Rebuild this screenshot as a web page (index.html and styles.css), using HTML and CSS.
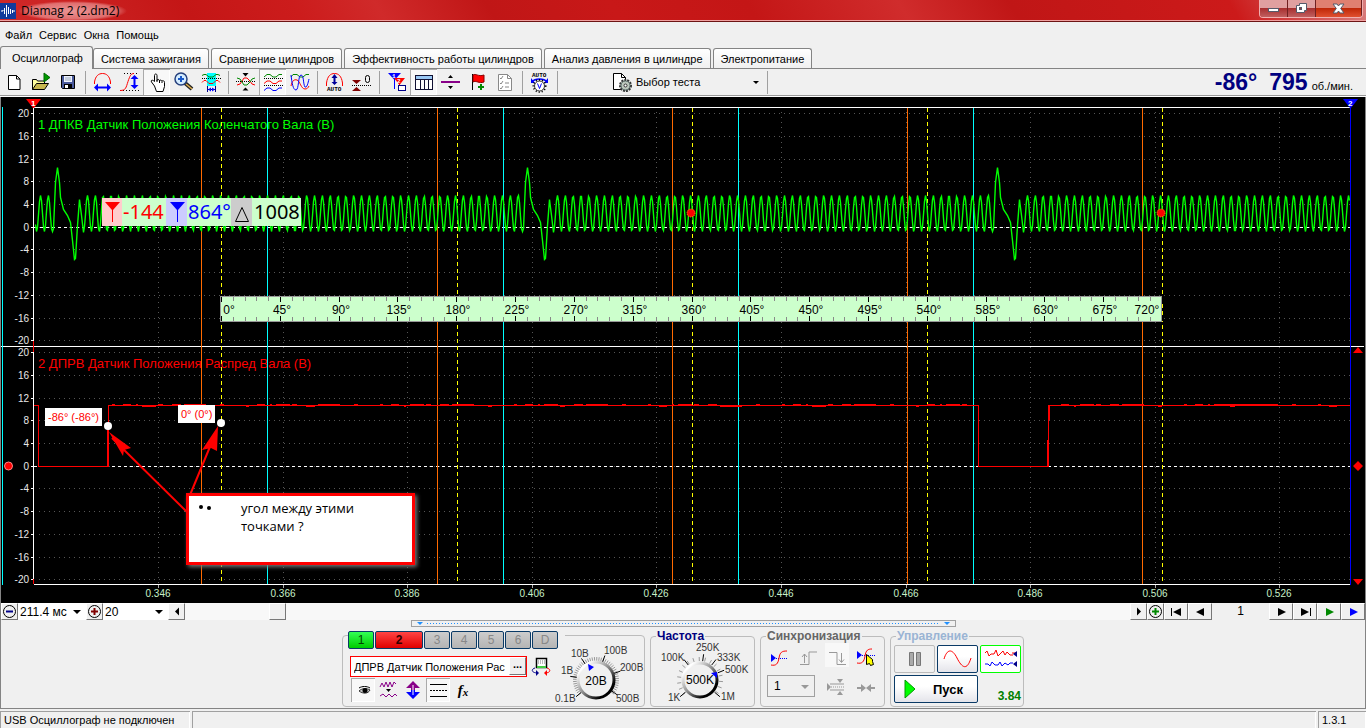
FILE: index.html
```html
<!DOCTYPE html>
<html lang="ru">
<head>
    <meta charset="UTF-8">
    <meta name="viewport" content="width=device-width, initial-scale=1.0">
    <title>Diamag 2 (2.dm2)</title>
    <link rel="stylesheet" href="styles.css">
</head>
<body>
    <header class="titlebar">
        <svg class="app-icon" width="16" height="16" viewBox="0 0 16 16">
            <rect width="16" height="16" fill="#123a9c"/>
            <path d="M1 8h2v-1M4.500 5v6M6.500 2v12M8.500 4v7M10.500 6v5M12.500 7v3M13 8h2" fill="none" stroke="#fff"/>
        </svg>
        <h1 class="title">Diamag 2 (2.dm2)</h1>
        <div class="window-buttons">
            <button class="win-btn" aria-label="Свернуть"><svg width="13" height="13"><rect x="1.500" y="6.500" width="10" height="3" fill="#fff" stroke="#555a6a"/></svg></button>
            <button class="win-btn" aria-label="Развернуть"><svg width="13" height="13"><path d="M4.500 1.500h7v7h-2v2h-8v-7h3z" fill="#fff" stroke="#555a6a"/><rect x="4.500" y="5.500" width="2" height="2" fill="#a33" stroke="#555a6a"/></svg></button>
            <button class="win-btn win-close" aria-label="Закрыть"><svg width="13" height="13"><path d="M1 2h4l1.500 2L8 2h4L8.700 6.500 12 11H8L6.500 9 5 11H1l3.300-4.500z" fill="#fff" stroke="#555a6a"/></svg></button>
        </div>
    </header>

    <nav class="menu">
        <a href="#">Файл</a>
        <a href="#">Сервис</a>
        <a href="#">Окна</a>
        <a href="#">Помощь</a>
    </nav>

    <div class="tabs" role="tablist">
        <button class="tab active" role="tab">Осциллограф</button>
        <button class="tab" role="tab">Система зажигания</button>
        <button class="tab" role="tab">Сравнение цилиндров</button>
        <button class="tab" role="tab">Эффективность работы цилиндров</button>
        <button class="tab" role="tab">Анализ давления в цилиндре</button>
        <button class="tab" role="tab">Электропитание</button>
    </div>

    <div class="toolbar">
        <button class="tool" aria-label="Новый"><svg viewBox="0 0 27 26"><path d="M8.500 6.500h8l3.500 3.500v10.500H8.500z" fill="#fff" stroke="#000"/><path d="M16.500 6.500V10H20" fill="none" stroke="#000"/></svg></button>
        <button class="tool" aria-label="Открыть"><svg viewBox="0 0 27 26"><path d="M5.500 20.500v-10h4l1 1.500h7v3" fill="#ffffa0" stroke="#000"/><path d="M5.500 20.500l4-6h12l-4 6z" fill="#c8b850" stroke="#000"/><path d="M17 4l6 4.500-6 4.500z" fill="#090" stroke="#060"/></svg></button>
        <button class="tool" aria-label="Сохранить"><svg viewBox="0 0 27 26"><path d="M7.500 6.500h13v13h-12l-1-1z" fill="#4a5a9c" stroke="#000"/><rect x="10" y="7" width="8" height="6" fill="#eef2ff"/><path d="M11 9h6M11 11h6" stroke="#9ab"/><rect x="10" y="15" width="8" height="5" fill="#000"/><rect x="11" y="16" width="3" height="3" fill="#fff"/></svg></button>
        <span class="sep"></span>
        <button class="tool" aria-label="Ширина"><svg viewBox="0 0 27 26"><path d="M5.500 15V13c1-6 4-8.500 8-8.500s7 2.500 8 8.500v2" fill="none" stroke="#f00"/><path d="M5 18.500l4-4v3h9v-3l4 4-4 4v-3H9v3z" fill="#00f"/></svg></button>
        <button class="tool" aria-label="Высота"><svg viewBox="0 0 27 26"><path d="M8 4.500h15M4 21.500h19" stroke="#000" stroke-dasharray="1 2"/><path d="M4 21.500c6 0 6-3 8-9s3-8 6-8" fill="none" stroke="#f00"/><path d="M18.500 6l4 4h-3v6h3l-4 4-4-4h3v-6h-3z" fill="#00f"/></svg></button>
        <button class="tool pressed" aria-label="Рука"><svg viewBox="0 0 27 26"><path d="M11.500 17l-3-4c-1-2 1-2.500 3-.5V6.500c0-2 2.500-2 2.500 0v5c0-1.500 2.500-1.500 2.500.5 0-1.500 2.500-1 2.500.500 0-1.500 2.500-1 2.500 1v4l-1.500 5h-6.500z" fill="#fff" stroke="#000"/><path d="M14 11v2M16.500 12v2M19 13v1" stroke="#000"/></svg></button>
        <button class="tool" aria-label="Лупа"><svg viewBox="0 0 27 26"><path d="M15 14l7 6" stroke="#222" stroke-width="4"/><path d="M16 15l6 5" stroke="#e0b050" stroke-width="1.500"/><circle cx="11" cy="10" r="6" fill="#d4ecff" stroke="#26407c" stroke-width="1.500"/><path d="M8 10h6M11 7v6" stroke="#1858c8" stroke-width="2"/></svg></button>
        <button class="tool" aria-label="Фрагмент"><svg viewBox="0 0 27 26"><path d="M10 4h9v13h-9z" fill="#0ff"/><path d="M5 6.500l2-1h2l3 2.500h4l3-2.500h2l2 1" fill="none" stroke="#080"/><path d="M5 9.500h19" stroke="#000" stroke-dasharray="1 1"/><path d="M5 13.500l2-2h2l3 3h4l3-3h2l2 2" fill="none" stroke="#f00"/><path d="M10.500 17v6M18.500 17v6M11 20.500h7" stroke="#008" fill="none"/><path d="M11 20.500l3-2v4zM18 20.500l-3-2v4z" fill="#00f"/></svg></button>
        <span class="sep"></span>
        <button class="tool" aria-label="Совместить"><svg viewBox="0 0 27 26"><path d="M10.500 4h6l-3 3.500zM10.500 21.500h6l-3-3z" fill="#000"/><path d="M4 12.500h20" stroke="#000" stroke-dasharray="1 1"/><path d="M5 16l3-1 2-3 2-3h3l3 3 2 3 3 1" fill="none" stroke="#f00"/><path d="M5 9l3 1 2 3 2 3h3l3-3 2-3 3-1" fill="none" stroke="#080"/></svg></button>
        <button class="tool pressed" aria-label="Разделить"><svg viewBox="0 0 27 26"><path d="M5 8l3-2.500h3l3 2.500h3l3-2.500h3" fill="none" stroke="#080"/><path d="M5 9.500h19M5 16.500h19" stroke="#000" stroke-dasharray="1 1"/><path d="M5 14.500l3-2.500h3l3 2.500h3l3-2.500h3" fill="none" stroke="#f00"/><path d="M5 21.500l3-2.500h3l3 2.500h3l3-2.500h3" fill="none" stroke="#00f"/></svg></button>
        <button class="tool" aria-label="Наложить"><svg viewBox="0 0 27 26"><path d="M5 8l2-2.500h4l3 2.500h3l3-2.500h3" fill="none" stroke="#080"/><path d="M5 17c1-5 3-7 6-6s4 9 8 9c2 0 3-1 4-3" fill="none" stroke="#f00"/><path d="M5 6c1 8 2 15 5 15s2-15 5-15 2 9 4 12c2 1 3-4 4-8" fill="none" stroke="#00f"/></svg></button>
        <span class="sep"></span>
        <button class="tool" aria-label="Авто"><svg viewBox="0 0 27 26"><path d="M5.500 17v-3c1-7 4-9.500 8-9.500s7 2.500 8 9.500v3" fill="none" stroke="#f00"/><path d="M13.500 5l3 4h-2v4h2l-3 3-3-3h2V9h-2z" fill="#009"/><text x="6" y="22" class="tiny">AUTO</text></svg></button>
        <button class="tool" aria-label="Ноль"><svg viewBox="0 0 27 26"><path d="M4 11h9l-4.500 4zM4 22h9l-4.500-4z" fill="#800000"/><path d="M4 16.500h19" stroke="#000" stroke-dasharray="1 1"/><rect x="17.500" y="6.500" width="4" height="7" rx="2" fill="none" stroke="#000"/></svg></button>
        <span class="sep"></span>
        <button class="tool" aria-label="Маркеры"><svg viewBox="0 0 27 26"><path d="M5 4h13l-6.500 7z" fill="#00f"/><path d="M11.500 10v10" stroke="#00f"/><path d="M11 9h11l-5.500 7z" fill="#f00"/><path d="M16.500 14v5" stroke="#f00"/><text x="9" y="9" class="tiny light">1</text><text x="14" y="14" class="tiny light">2</text><rect x="15.500" y="16.500" width="7" height="5" fill="#fff" stroke="#008"/></svg></button>
        <button class="tool pressed" aria-label="Таблица"><svg viewBox="0 0 27 26"><rect x="5.500" y="6.500" width="17" height="14" fill="#fff" stroke="#113"/><path d="M6 7h16v3H6z" fill="#9ac8f4"/><path d="M6 10.500h16M10.500 10v10M14.500 10v10M18.500 10v10" stroke="#113"/></svg></button>
        <button class="tool" aria-label="Линия"><svg viewBox="0 0 27 26"><path d="M4 12h19v2H4z" fill="#808"/><path d="M11 9h5l-2.500-3zM11 17h5l-2.500 3z" fill="#000"/></svg></button>
        <button class="tool" aria-label="Флаг"><svg viewBox="0 0 27 26"><path d="M8.500 5v16" stroke="#000"/><path d="M9 6c3-2 5 2 11 0v7c-5 2-8-2-11 0z" fill="#f00" stroke="#800"/><path d="M14 18h6M17 15v6" stroke="#080" stroke-width="2"/></svg></button>
        <button class="tool" aria-label="Список"><svg viewBox="0 0 27 26"><path d="M7.500 5.500h9l4 4v12h-13z" fill="#fff" stroke="#888"/><path d="M16.500 5.500v4h4M9 9l1 1 2-3M9 14l1 1 2-3M9 19l1 1 2-3M14 14h4M14 18h4" fill="none" stroke="#888"/></svg></button>
        <span class="sep"></span>
        <button class="tool" aria-label="Автоизмерение"><svg viewBox="0 0 27 26"><text x="6" y="8" class="tiny">AUTO</text><path d="M6 13c3-4 12-4 15 0" fill="none" stroke="#00f" stroke-width="1.500"/><path d="M5 9v5h4zM22 9v5h-4z" fill="#00f"/><circle cx="13.500" cy="17" r="6" fill="none" stroke="#000" stroke-width="2" stroke-dasharray="1 2"/><circle cx="13.500" cy="17" r="5" fill="#fff" stroke="#333"/><path d="M11.500 14.500l2 5 2-5" fill="none" stroke="#00f"/></svg></button>
        <span class="sep"></span>
        <button class="test-select">
            <svg width="21" height="21" viewBox="0 0 21 21"><path d="M1.500 1.500h8l4 4v12h-12z" fill="#fff" stroke="#000"/><path d="M9.500 1.500v4h4" fill="none" stroke="#000"/><circle cx="13.500" cy="13.500" r="5.500" fill="#c8d4c8" stroke="#333" stroke-width="2" stroke-dasharray="2 1"/><circle cx="13.500" cy="13.500" r="4.500" fill="#bcc8bc" stroke="#566"/><circle cx="13.500" cy="13.500" r="1.500" fill="#fff" stroke="#333"/></svg>
            <span>Выбор теста</span>
            <i class="caret"></i>
        </button>
        <span class="sep"></span>
        <div class="rpm">
            <strong>-86°</strong>
            <strong>795</strong>
            <span>об./мин.</span>
        </div>
    </div>

    <main class="scope">
        <svg id="plot" viewBox="1 97 1364 506" xmlns="http://www.w3.org/2000/svg">
            <g id="grid"></g>
            <g class="crisp">
                <path d="M34 107.500H1350M1 346.500H1364M34 584.500H1350" stroke="#fff"/>
                <path d="M33.500 108V584" stroke="#fff"/>
                <path d="M33.500 341V352M33.500 579V584" stroke="#f00"/>
                <path d="M2.500 107V585" stroke="#0ff"/>
                <path d="M34 227.500H1350M34 466.500H1350" stroke="#fff" stroke-dasharray="3 3"/>
            </g>
            <text x="38" y="129" class="channel ch1">1 ДПКВ Датчик Положения Коленчатого Вала (В)</text>
            <text x="38" y="368" class="channel ch2">2 ДПРВ Датчик Положения Распред Вала (В)</text>
            <g id="cursors" class="crisp"></g>
            <path id="crank" class="trace" stroke="#0f0"/>
            <path id="cam" class="trace crisp" stroke="#f00"/>
            <path id="camNoise" class="trace crisp" stroke="#f00"/>
            <g id="ruler" class="crisp"></g>

            <!-- cursor readout -->
            <g class="readout">
                <path d="M102 198h199v28h-199z" fill="#cfc"/>
                <path d="M102 198h20v28h-20z" fill="#fcc"/>
                <path d="M166 198h21v28h-21z" fill="#ccf"/>
                <path d="M231 198h21v28h-21z" fill="#ccc"/>
                <path d="M105 202h15l-7 8v12h-1v-12z" fill="#f00"/>
                <path d="M170 202h15l-7 8v12h-1v-12z" fill="#00f"/>
                <path d="M235.500 221.500l6.500-14 6.500 14z" fill="none" stroke="#000"/>
                <text x="123" y="219" fill="#f00">-144</text>
                <text x="188" y="219" fill="#00f">864°</text>
                <text x="254" y="219">1008</text>
            </g>

            <!-- markers -->
            <path d="M26 99h15l-7 9h-1z" fill="#f00"/>
            <path d="M1343 99h15l-7 9h-1z" fill="#00f"/>
            <path d="M1350 107h1v478h-1z" fill="#00f"/>
            <text x="31" y="106" class="pin">1</text>
            <text x="1348" y="106" class="pin">2</text>
            <circle cx="8.500" cy="466" r="4" fill="#f00" stroke="#f88"/>
            <path d="M1358 347l5 6h-10zM1358 461l5 5-5 5-5-5zM1353 579h10l-5 6z" fill="#f00"/>
            <circle cx="691" cy="213" r="4" fill="#f00" stroke="#fa0" stroke-dasharray="1 1"/>
            <circle cx="1161" cy="213" r="4" fill="#f00" stroke="#fa0" stroke-dasharray="1 1"/>

            <!-- note with arrows -->
            <path d="M188 513L112 438M190 495L214 437" stroke="#f00" stroke-width="2"/>
            <path d="M109 432l22 16-7 2-1 6zM218 426l-1 25-6-3-9 2z" fill="#f00"/>
            <path d="M45 408h57v18H45zM178 405h37v18h-37z" fill="#fff"/>
            <text x="48" y="421" class="angle">-86° (-86°)</text>
            <text x="181" y="418" class="angle">0° (0°)</text>
            <circle cx="108" cy="426" r="4" fill="#fff"/>
            <circle cx="221" cy="423" r="4" fill="#fff"/>
            <rect x="187.500" y="494.500" width="226" height="69" class="note"/>
            <circle cx="201" cy="507" r="2"/>
            <circle cx="209" cy="508" r="2"/>
            <text x="241" y="513" class="note-text">угол между этими</text>
            <text x="241" y="531" class="note-text">точками ?</text>
        </svg>

        <div class="scroll-row">
            <button class="nav-btn small" aria-label="Уменьшить"><svg width="15" height="15"><circle cx="7.500" cy="7.500" r="6" fill="none" stroke="#000"/><path d="M4 7.500h7" stroke="#008" stroke-width="2"/></svg></button>
            <span class="combo combo-time"><select aria-label="Время"><option>211.4 мс</option></select></span>
            <button class="nav-btn small" aria-label="Увеличить"><svg width="15" height="15"><circle cx="7.500" cy="7.500" r="6" fill="none" stroke="#000"/><path d="M4 7.500h7M7.500 4v7" stroke="#800000" stroke-width="2"/></svg></button>
            <span class="combo combo-volt"><select aria-label="Вольты"><option>20</option></select></span>
            <button class="nav-btn small" aria-label="Влево"><svg width="15" height="15"><path d="M10 3.500v8l-4-4z"/></svg></button>
            <input class="track" type="range" min="0" max="1000" value="91" aria-label="Прокрутка">
            <button class="nav-btn small" aria-label="Вправо"><svg width="15" height="15"><path d="M6 3.500v8l4-4z"/></svg></button>
            <button class="nav-btn small" aria-label="Добавить"><svg width="15" height="15"><circle cx="7.500" cy="7.500" r="6" fill="none" stroke="#000"/><path d="M4 7.500h7M7.500 4v7" stroke="#080" stroke-width="2"/></svg></button>
            <button class="nav-btn" aria-label="В начало"><svg width="15" height="15"><path d="M2 4h1v8H2zM12 4v8L4 8z"/></svg></button>
            <button class="nav-btn" aria-label="Назад"><svg width="15" height="15"><path d="M11 4v8L3 8z"/></svg></button>
            <span class="frame-no">1</span>
            <button class="nav-btn" aria-label="Вперёд"><svg width="15" height="15"><path d="M4 4v8l8-4z"/></svg></button>
            <button class="nav-btn" aria-label="В конец"><svg width="15" height="15"><path d="M3 4v8l8-4zM12 4h1v8h-1z"/></svg></button>
            <button class="nav-btn" aria-label="Воспроизвести"><svg width="15" height="15"><path d="M4 4v8l8-4z" fill="#080"/></svg></button>
            <button class="nav-btn" aria-label="Дальше"><svg width="15" height="15"><path d="M4 4v8l8-4z" fill="#00f"/></svg></button>
        </div>
    </main>

    <section class="bottom">
        <button class="splitter" aria-label="Свернуть панель"><i></i><b></b><i></i></button>

        <div class="panels">
            <div class="group group-channel">
                <div class="left">
                    <div class="channels">
                        <button class="ch green">1</button>
                        <button class="ch red">2</button>
                        <button class="ch">3</button>
                        <button class="ch">4</button>
                        <button class="ch">5</button>
                        <button class="ch">6</button>
                        <button class="ch">D</button>
                    </div>
                    <div class="sensor">
                        <div class="sensor-box">
                            <input type="text" value="ДПРВ Датчик Положения Рас" aria-label="Датчик">
                            <button class="nav-btn dots" aria-label="Выбрать">...</button>
                        </div>
                        <svg width="20" height="20" viewBox="0 0 20 20"><path d="M5.500 1.500h10v9h-10z" fill="#fff" stroke="#000" stroke-width="1.500"/><path d="M7 4h7M7 6h7" stroke="#777" stroke-dasharray="1 1"/><path d="M6 9h9v2H6z" fill="#4c4"/><path d="M4 11c-4 1-4 5 3 5" fill="none" stroke="#008"/><path d="M5 13v6l3-3z" fill="#008"/><path d="M16 11c4 1 4 5-2 5" fill="none" stroke="#f00"/><path d="M16 13v6l-3-3z" fill="#f00"/></svg>
                    </div>
                    <div class="mini-tools">
                        <button class="mini pressed" aria-label="Показать"><svg viewBox="0 0 24 24"><path d="M8 10c3-2 8-2 11 0" fill="none" stroke="#000"/><path d="M8 13c3-3 8-3 11-1-2 4-7 4-11 1z" fill="#ccc" stroke="#333"/><circle cx="14" cy="12.500" r="2.500"/></svg></button>
                        <button class="mini" aria-label="Фильтр"><svg viewBox="0 0 24 24"><path d="M4 9l2-4 2 4 2-5 2 5 2-5 2 5 2-5 2 2M4 18l3-2 3 3 3-3 3 3 3-3 2 2" fill="none" stroke="#808"/><path d="M10 11h5l-2.500 3z"/></svg></button>
                        <button class="mini" aria-label="Сдвиг"><svg viewBox="0 0 24 24"><path d="M12 3l7 7h-5v2h-4v-2H5z" fill="#808"/><path d="M12 21l7-7h-5v-2h-4v2H5z" fill="#00f"/><path d="M12 7v10" stroke="#fff"/></svg></button>
                        <button class="mini pressed" aria-label="Уровни"><svg viewBox="0 0 24 24"><path d="M4 6.500h17M4 18.500h17" stroke="#000"/><path d="M4 12.500h17" stroke="#000" stroke-dasharray="2 1"/></svg></button>
                        <button class="mini fx" aria-label="Функция">f<sub>x</sub></button>
                    </div>
                </div>
                <svg class="dial" width="88" height="70" viewBox="556 636 88 70">
                    <defs>
                        <linearGradient id="metal" x1="0" y1="0" x2="1" y2="1">
                            <stop offset="0.15" stop-color="#fff"/>
                            <stop offset="0.5" stop-color="#888"/>
                            <stop offset="0.8" stop-color="#000"/>
                        </linearGradient>
                    </defs>
                    <g id="dial1"></g>
                    <circle cx="596" cy="680" r="18" class="knob" stroke="url(#metal)"/>
                    <path d="M588 664l6 3-5 4z" fill="#00f"/>
                    <text x="596" y="685" text-anchor="middle" class="dial-value">20В</text>
                    <text x="571" y="657">10В</text>
                    <text x="604" y="654">100В</text>
                    <text x="561" y="674">1В</text>
                    <text x="620" y="671">200В</text>
                    <text x="555" y="702">0.1В</text>
                    <text x="616" y="702">500В</text>
                </svg>
            </div>

            <fieldset class="group group-freq">
                <legend>Частота</legend>
                <svg class="dial" width="90" height="62" viewBox="658 644 90 62">
                    <g id="dial2"></g>
                    <circle cx="700" cy="681" r="17" class="knob" stroke="url(#metal)"/>
                    <path d="M711 674l6-1v6z" fill="#00f"/>
                    <text x="700" y="685" text-anchor="middle" class="dial-value">500K</text>
                    <text x="661" y="662">100K</text>
                    <text x="696" y="652">250K</text>
                    <text x="717" y="662">333K</text>
                    <text x="725" y="674">500K</text>
                    <text x="668" y="702">1K</text>
                    <text x="721" y="701">1M</text>
                </svg>
            </fieldset>

            <fieldset class="group group-sync">
                <legend>Синхронизация</legend>
                <div class="sync-row">
                    <button class="mini" aria-label="По уровню"><svg viewBox="0 0 24 24"><path d="M4 11v8l5-4z" fill="#00f"/><path d="M9 15.500h12" stroke="#00f" stroke-dasharray="1 1"/><path d="M4 22c5 1 7-1 8-7s3-7 8-7" fill="none" stroke="#f00"/></svg></button>
                    <button class="mini" aria-label="По фронту"><svg viewBox="0 0 24 24"><path d="M4 21.500h9V9h8M8.500 20v-9M6 14l2.500-3 2.500 3" fill="none" stroke="#999"/></svg></button>
                    <button class="mini shaded" aria-label="По спаду"><svg viewBox="0 0 24 24"><path d="M4 9.500h8v12h9M16.500 10v9M14 16.500l2.500 3 2.500-3" fill="none" stroke="#999"/></svg></button>
                    <button class="mini" aria-label="Указать"><svg viewBox="0 0 24 24"><path d="M3 8v8l5-4z" fill="#00f"/><path d="M8 12.500h13" stroke="#00f" stroke-dasharray="1 1"/><path d="M3 20c5 1 7-1 8-7s3-7 7-7" fill="none" stroke="#f00"/><path d="M12.500 11.500v10l3-1 1 2 3-1-1-3v-2z" fill="#ff0" stroke="#000"/></svg></button>
                </div>
                <div class="sync-row">
                    <span class="combo combo-sync"><select aria-label="Канал" disabled><option>1</option></select></span>
                    <button class="mini" aria-label="Порог"><svg viewBox="0 0 24 24"><path d="M4 11v8l4-4zM14 7h6l-3 4zM14 23h6l-3-4z" fill="#999"/><path d="M8 15h13" stroke="#999" stroke-dasharray="1 1"/><path d="M7 12h14M7 18h14" stroke="#999"/></svg></button>
                    <button class="mini" aria-label="Центр"><svg viewBox="0 0 24 24"><path d="M3 15h4v-3l5 4-5 4v-3H3zM21 15h-4v-3l-5 4 5 4v-3h4z" fill="#999"/></svg></button>
                </div>
            </fieldset>

            <fieldset class="group group-control">
                <legend>Управление</legend>
                <div class="control-grid">
                    <button class="big off" aria-label="Пауза"><svg width="30" height="20"><path d="M9.500 3.500h4v13h-4zM16.500 3.500h4v13h-4z" fill="#aaa" stroke="#777"/></svg></button>
                    <button class="big" aria-label="Синус"><svg width="30" height="20"><path d="M1 10C4 0 9-1 14 9s10 13 14 0" fill="none" stroke="#f00"/></svg></button>
                    <button class="big on" aria-label="Запись"><svg width="34" height="22"><path d="M1 5l2-2 2 5 2-2 3 0 2-4 2 6 2-2 3-3 2 4 2-3 3 3h3M28 5h4" fill="none" stroke="#f00"/><path d="M1 16h3l2 2 2-4 3 3h3l2-3 2 4 3-3 3 2 2-2h3" fill="none" stroke="#00f"/><path d="M33 3v6l-4-3zM33 13v6l-4-3z" fill="#008"/></svg></button>
                    <button class="big start"><svg width="12" height="20"><path d="M1 1v18l10-9z" fill="#0f0" stroke="#090"/></svg><span>Пуск</span></button>
                    <output class="version">3.84</output>
                </div>
            </fieldset>
        </div>
    </section>

    <footer class="status">
        <span class="cell cell-msg">USB Осциллограф не подключен</span>
        <span class="cell cell-fill"></span>
        <span class="cell cell-ver">1.3.1</span>
    </footer>

    <script>
        const LEFT = 34, RIGHT = 1350;
        const byId = id => document.getElementById(id);

        // dotted grid with axis labels for both panels
        let grid = '';
        [226.8, 465.8].forEach(zero => {
            for (let v = 20; v >= -20; v -= 4) {
                const y = Math.round(zero - v * 5.67);
                grid += `<path d="M${LEFT + 5} ${y + .5}H${RIGHT}" stroke="#555" stroke-dasharray="1 4"/>`;
                grid += `<path d="M31 ${y + .5}H34" stroke="#fff"/>`;
                grid += `<text x="29" y="${y + 4}" class="axis axis-y">${v}</text>`;
            }
        });
        for (let i = 0; i < 10; i++) {
            const x = Math.round(158 + i * 124.6);
            grid += `<path d="M${x + .5} 112V584" stroke="#555" stroke-dasharray="1 4"/>`;
            grid += `<path d="M${x + .5} 585V588" stroke="#aaa"/>`;
            grid += `<text x="${x}" y="597" class="axis axis-x">${(0.346 + i * 0.02).toFixed(3)}</text>`;
        }
        byId('grid').innerHTML = grid;

        // cylinder cursors
        const orange = [201, 437, 672, 907, 1142];
        const yellow = [221, 457, 692, 927, 1162];
        const cyan = [267, 503, 738, 973];
        byId('cursors').innerHTML =
            orange.map(x => `<path d="M${x + .5} 108V584" stroke="#ff6a00"/>`).join('') +
            yellow.map(x => `<path d="M${x + .5} 108V584" stroke="#ff0" stroke-dasharray="4 3"/>`).join('') +
            cyan.map(x => `<path d="M${x + .5} 108V584" stroke="#0ff"/>`).join('');

        // crank sensor: 58 teeth and a gap on every turn
        const gap = [[-5, 231], [-4, 228], [-2, 182], [0, 167], [2, 182], [3, 197], [6, 209], [10, 215],
                     [13, 222], [15, 240], [17, 259], [18, 258], [20, 225], [22, 199], [24, 215], [26, 232]];
        const points = [];
        for (let x = 35; x < RIGHT; x++) {
            let d = (x - 57) % 470;
            if (d > 460) d -= 470;
            if (d >= -5 && d <= 26) {
                const step = gap.find(p => p[0] === d);
                if (step) points.push([x, step[1]]);
                continue;
            }
            const phase = (d - 30) / 7.83 * 2 * Math.PI;
            points.push([x, Math.round(213 - 18 * Math.cos(phase))]);
        }
        byId('crank').setAttribute('d', 'M' + points.map(p => (p[0] + .5) + ' ' + (p[1] + .5)).join('L'));

        // cam sensor, with short runs of noise along the high level
        byId('cam').setAttribute('d', 'M34 405.5H38.5V466.5H108.5V405.5H978.5V466.5H1048.5V405.5H1350');
        let noise = 'M107.5 430V466M1047.5 440V466M1049.5 406V420';
        const runs = [3, 8, 2, 14, 5, 9, 22, 4];
        for (let x = 112, i = 0; x < 1330; i++) {
            const w = runs[i % 8];
            if (x < 965 || x > 1050) noise += `M${x} ${i % 5 === 3 ? 406.5 : 404.5}h${w}`;
            x += w + runs[(i * 3 + 1) % 8];
        }
        noise += 'M1215 404.5H1264';
        byId('camNoise').setAttribute('d', noise);

        // angle ruler
        let ruler = '<path d="M220.500 296.500H1161.500V321.500H220.500z" fill="#cfc" stroke="#999"/>';
        for (let a = 0; a <= 720; a += 9) {
            const x = Math.round(221 + a * 470.5 / 360);
            const major = a % 45 === 0;
            const h = major ? 5 : 4;
            ruler += `<path d="M${x + .5} 297v${h}M${x + .5} 321v-${h}" stroke="${major ? '#000' : '#888'}"/>`;
            if (major) {
                const tx = a === 0 ? 229 : a === 720 ? 1147 : x + 2;
                ruler += `<text x="${tx}" y="314" class="ruler-text">${a}°</text>`;
            }
        }
        byId('ruler').innerHTML = ruler;

        // dial scales
        function scale(id, cx, cy, r, step, marks) {
            let s = '';
            const line = (a, r1, r2, color) => {
                const t = a * Math.PI / 180;
                s += `<path d="M${cx + r1 * Math.sin(t)} ${cy - r1 * Math.cos(t)}L${cx + r2 * Math.sin(t)} ${cy - r2 * Math.cos(t)}" stroke="${color}"/>`;
            };
            for (let a = -130; a <= 130; a += step) line(a, r, r + 4, '#999');
            marks.forEach(a => line(a, r, r + 7, '#000'));
            byId(id).innerHTML = s;
        }
        scale('dial1', 596, 680, 19, 6, [-130, -82, -34, 20, 70, 125]);
        scale('dial2', 700, 681, 19, 16, [-130, -38, 8, 38, 68, 130]);
    </script>
</body>
</html>
```
FILE: styles.css
```css
* {
    box-sizing: border-box;
}

body {
    margin: 0;
    min-height: 100vh;
    display: flex;
    flex-direction: column;
    background: #f0f0f0;
    color: #000;
    font-family: "Liberation Sans", Arial, sans-serif;
    font-size: 12px;
}

button, input, select {
    font: inherit;
    color: inherit;
    margin: 0;
    padding: 0;
    border: none;
    border-radius: 0;
    background: none;
}

svg {
    display: block;
}

.crisp {
    shape-rendering: crispEdges;
}

/* title bar */
.titlebar {
    display: flex;
    align-items: center;
    height: 22px;
    background: linear-gradient(60deg, #d02a2a 0%, #c41616 14%, #cc1c1c 22%, #d02a2a 28%, #c01616 36%, #c81818 45%, #c41616 55%, #d02c2c 66%, #c01616 74%, #cc1a1a 90%, #d88080 100%);
    border-bottom: 1px solid #6e1515;
    box-shadow: inset 0 -1px #f0a0a0;
}

.app-icon {
    flex: none;
}

.title {
    margin: 0 0 0 2px;
    padding: 0 8px 0 3px;
    font: 12px/20px "Open Sans", "Noto Sans", sans-serif;
    background: radial-gradient(closest-side, rgba(255, 225, 225, 0.6), rgba(255, 225, 225, 0.4) 80%, transparent);
}

.window-buttons {
    display: flex;
    align-self: flex-start;
    height: 18px;
    margin: 0 3px 0 auto;
    border: 1px solid #f0b0b0;
    border-top: none;
    border-radius: 0 0 4px 4px;
    overflow: hidden;
}

.win-btn {
    display: flex;
    align-items: center;
    justify-content: center;
    width: 28px;
    background: linear-gradient(#e0a0a0 45%, #a83030 50%, #c06060);
    border-right: 1px solid #702020;
}

.win-close {
    width: 46px;
    background: linear-gradient(#e08070 45%, #c02808 50%, #e05030);
}

/* menu and tabs */
.menu {
    display: flex;
    gap: 7px;
    height: 24px;
    padding-left: 5px;
    line-height: 26px;
    font-size: 11px;
}

.menu a {
    color: inherit;
    text-decoration: none;
}

.tabs {
    display: flex;
    align-items: flex-end;
    gap: 2px;
    height: 23px;
    border-bottom: 1px solid #848484;
    font-size: 11px;
}

.tab {
    height: 20px;
    padding: 0 7px;
    border: 1px solid #848484;
    border-bottom: none;
    border-radius: 3px 3px 0 0;
    background: linear-gradient(#fff, #f0f0f0);
    white-space: nowrap;
}

.tab.active {
    height: 23px;
    padding: 0 9px 0 11px;
    margin: 0 -2px -1px 0;
    background: #f0f0f0;
}

/* toolbar */
.toolbar {
    display: flex;
    height: 28px;
    border-bottom: 1px solid #fff;
    box-shadow: inset 0 -1px #999;
}

.tool {
    width: 27px;
    height: 26px;
}

.tool svg {
    width: 27px;
    height: 26px;
}

.pressed {
    background: #f8f8f8;
    box-shadow: inset 1px 1px #aaa, inset -1px -1px #fff;
}

.tiny {
    font: bold 6px "Liberation Mono", monospace;
}

.light {
    fill: #fff;
}

.sep {
    width: 8px;
    border-left: 1px solid #a0a0a0;
    margin-top: 2px;
    height: 23px;
    margin-left: 4px;
    margin-right: -4px;
}

.test-select {
    display: flex;
    align-items: center;
    gap: 3px;
    width: 202px;
    height: 26px;
    padding-left: 51px;
    font-size: 11px;
    white-space: nowrap;
}

.caret {
    margin: 0 4px 0 auto;
    border: 3px solid transparent;
    border-top-color: #000;
    border-bottom: none;
}

.rpm {
    display: flex;
    align-items: baseline;
    margin: 0 13px 0 auto;
    white-space: nowrap;
}

.rpm strong {
    font-size: 23px;
    line-height: 26px;
    color: #000080;
    margin-left: 12px;
}

.rpm span {
    margin-left: 4px;
    font-size: 11px;
}

/* oscilloscope */
.scope {
    border: solid #848484;
    border-width: 0 1px;
}

#plot {
    width: 100%;
    height: auto;
    background: #000;
}

.trace {
    fill: none;
    stroke-width: 1;
}

#crank {
    stroke-width: 1.4;
}

.channel {
    font-size: 13px;
}

.ch1 {
    fill: #0f0;
}

.ch2 {
    fill: #f00;
}

.axis {
    font-size: 10px;
    fill: #e8e8e8;
}

.axis-y {
    text-anchor: end;
}

.axis-x {
    text-anchor: middle;
    fill: #c8f0c8;
}

.ruler-text {
    font-size: 12px;
    text-anchor: middle;
}

.readout text {
    font: 20px "Noto Sans", "Open Sans", sans-serif;
}

.pin {
    font-size: 8px;
    font-weight: bold;
    fill: #fff;
}

.angle {
    font-size: 11px;
    fill: #f00;
}

.note {
    fill: #fff;
    stroke: #f00;
    stroke-width: 3;
    filter: drop-shadow(2px 2px 2px #777);
}

.note-text {
    font: 13px "Open Sans", "Noto Sans", sans-serif;
}

/* scroll row */
.scroll-row {
    display: flex;
    height: 17px;
}

.nav-btn {
    display: flex;
    align-items: center;
    justify-content: center;
    flex: none;
    width: 24px;
    height: 17px;
    background: #f0f0f0;
    border: 1px solid;
    border-color: #fff #777 #777 #fff;
}

.nav-btn.small {
    width: 17px;
}

.combo {
    position: relative;
    display: flex;
    background: #fff;
}

.combo::after {
    content: "";
    position: absolute;
    right: 5px;
    top: 7px;
    border: 4px solid transparent;
    border-top-color: #000;
    border-bottom: none;
    pointer-events: none;
}

.combo select {
    appearance: none;
    width: 100%;
    padding-left: 2px;
}

.combo-time {
    width: 68px;
}

.combo-volt {
    width: 65px;
}

.track {
    appearance: none;
    flex: 1;
    min-width: 0;
    height: 17px;
    background: #f8f8f8;
}

.track::-webkit-slider-thumb {
    appearance: none;
    width: 17px;
    height: 17px;
    background: #f0f0f0;
    border: 1px solid;
    border-color: #fff #777 #777 #fff;
}

.frame-no {
    width: 57px;
    line-height: 17px;
    text-align: center;
}

/* bottom panels */
.bottom {
    flex: 1;
    border: solid #848484;
    border-width: 0 1px 1px;
}

.splitter {
    display: flex;
    align-items: center;
    width: 545px;
    height: 7px;
    margin: 0 auto;
    padding: 0 5px;
    border: 1px solid #a0a0a0;
}

.splitter i {
    border: 3px solid transparent;
    border-top-color: #1e90ff;
    border-bottom: none;
}

.splitter b {
    flex: 1;
    height: 1px;
    margin: 0 4px;
    background: repeating-linear-gradient(90deg, #1e90ff 0 1px, transparent 1px 3px);
}

.panels {
    display: flex;
    align-items: stretch;
    justify-content: center;
    gap: 5px;
    height: 80px;
}

.group {
    margin: 2px 0 0;
    padding: 0 3px;
    min-width: 0;
    border: 1px solid #bcbcbc;
    border-radius: 4px;
}

.group legend {
    margin-left: 2px;
    padding: 0 1px;
    font-weight: bold;
    font-size: 12px;
    line-height: 14px;
}

.group-channel {
    display: flex;
    width: 303px;
    margin-top: 8px;
    padding: 0 0 0 5px;
}

.left {
    width: 208px;
}

.channels {
    display: flex;
    gap: 1px;
    width: 217px;
    margin-top: -5px;
    background: #f0f0f0;
}

.ch {
    width: 26px;
    height: 18px;
    border: 1px solid #0a3a66;
    border-radius: 2px;
    background: linear-gradient(#ccc, #b4b4b4);
    color: #888;
}

.ch.green {
    background: linear-gradient(#3f5, #0c0);
    color: #040;
}

.ch.red {
    width: 48px;
    background: linear-gradient(#f44, #e00000);
    color: #300;
    font-weight: bold;
}

.sensor {
    display: flex;
    align-items: center;
    gap: 4px;
    margin: 7px 0 1px 2px;
}

.sensor-box {
    display: flex;
    width: 177px;
    height: 21px;
    border: 1px solid #f00;
    background: #fff;
    font-size: 11px;
}

.sensor-box input {
    flex: 1;
    min-width: 0;
    padding-left: 3px;
    outline: none;
}

.dots {
    width: 17px;
    height: 18px;
    font-weight: bold;
    line-height: 8px;
    padding-bottom: 5px;
}

.mini-tools {
    display: flex;
    gap: 1px;
    margin-left: 3px;
}

.mini {
    width: 24px;
    height: 24px;
}

.mini svg {
    width: 24px;
    height: 24px;
}

.fx {
    font: italic bold 15px "Liberation Serif", serif;
}

.fx sub {
    font-size: 11px;
    vertical-align: -1px;
}

.dial {
    overflow: visible;
}

.dial text {
    font-size: 10px;
    fill: #333;
}

.dial .dial-value {
    font-size: 12px;
    fill: #000;
}

.knob {
    fill: #f0f0f0;
    stroke-width: 3;
}

.group-freq {
    width: 105px;
    padding-left: 7px;
}

.group-freq legend {
    margin-left: -2px;
    color: #000080;
}

.group-sync {
    width: 125px;
}

.group-sync legend {
    color: #666;
}

.sync-row {
    display: flex;
    justify-content: space-between;
    height: 29px;
    padding: 0 3px;
}

.shaded {
    background: #f8f8f8;
}

.combo-sync {
    width: 48px;
    height: 22px;
    margin-top: 3px;
    padding-left: 4px;
    border: 1px solid #a0a0a0;
    background: #f0f0f0;
}

.combo-sync::after {
    top: 9px;
    border-top-color: #999;
}

.combo-sync select {
    opacity: 1;
}

.group-control {
    width: 134px;
}

.group-control legend {
    color: #9ab4d4;
}

.control-grid {
    display: grid;
    grid-template-columns: 41px 41px 41px;
    gap: 2px;
    margin-top: 2px;
}

.big {
    display: flex;
    align-items: center;
    justify-content: center;
    height: 28px;
    border: 1px solid #0a3a66;
    border-radius: 2px;
    background: linear-gradient(#fff 40%, #e4e4ea);
}

.big.off {
    border-color: #bbb;
    background: #f0f0f0;
}

.big.on {
    border: 1px solid #0f0;
    background: #fff;
}

.start {
    grid-column: span 2;
    justify-content: flex-start;
    gap: 17px;
    padding-left: 9px;
    font-weight: bold;
    font-size: 13px;
}

.version {
    align-self: end;
    text-align: right;
    color: #008000;
    font-weight: bold;
    font-size: 12px;
}

/* status bar */
.status {
    display: flex;
    gap: 2px;
    height: 17px;
    margin-top: 2px;
    font-size: 11px;
    line-height: 17px;
}

.cell {
    padding-left: 3px;
    border: solid #a0a0a0;
    border-width: 1px 0 0 1px;
    box-shadow: inset -1px 0 #fff;
}

.cell-msg {
    width: 190px;
}

.cell-fill {
    flex: 1;
}

.cell-ver {
    width: 48px;
}
```
